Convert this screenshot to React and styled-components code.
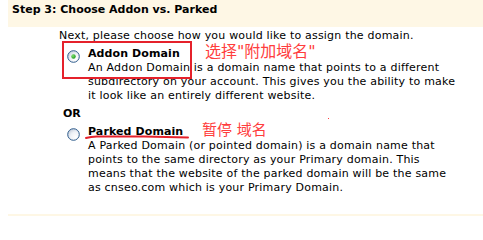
import React from 'react';
import styled, { createGlobalStyle } from 'styled-components';

const GlobalStyle = createGlobalStyle`
  html, body { margin: 0; padding: 0; background: #fff; }
  body {
    font-family: 'DejaVu Sans', Verdana, sans-serif;
    font-size: 11px;
    color: #000;
  }
`;

const Page = styled.div`
  position: relative;
  display: flex;
  flex-direction: column;
  width: 483px;
  height: 216px;
  overflow: hidden;
  background: #fff;
`;

const StepHeader = styled.div`
  box-sizing: border-box;
  flex-shrink: 0;
  height: 27px;
  margin-left: 8px;
  padding: 3px 0 0 4px;
  background: #fef7e5;
  font-weight: 700;
  line-height: 14px;
`;

const Intro = styled.div`
  margin-top: 2px;
  padding-left: 59px;
  line-height: 14px;
  letter-spacing: 0.2px;
  white-space: nowrap;
`;

const Option = styled.div`
  display: flex;
  align-items: flex-start;
  gap: 8px;
  margin-top: 4px;
  padding-left: 67px;
`;

const RadioWrap = styled.div`
  flex-shrink: 0;
  width: 13px;
  height: 13px;
  margin-top: 3px;
`;

const OptionText = styled.div`
  line-height: 14px;
  letter-spacing: 0.2px;
  white-space: nowrap;
`;

const OptionTitle = styled.div`
  font-weight: 700;
  letter-spacing: 0.1px;
`;

const Or = styled.div`
  margin-top: 4px;
  padding-left: 63px;
  font-weight: 700;
  line-height: 14px;
`;

const BottomBar = styled.div`
  flex-shrink: 0;
  margin: auto 0 0 8px;
  height: 2px;
  background: #fef7e5;
`;

// hand-drawn annotations lying over the screenshot
const MarkBox = styled.div`
  position: absolute;
  left: 62px;
  top: 41px;
  width: 126px;
  height: 34px;
  border: 2px solid #e5212b;
`;

const Note = styled.div`
  position: absolute;
  left: ${p => p.$x}px;
  top: ${p => p.$y}px;
  font-family: 'DejaVu Sans', 'Noto Sans CJK SC', sans-serif;
  font-size: ${p => p.$size}px;
  line-height: 1;
  color: #ff3d3d;
  white-space: nowrap;
`;

const Underline = styled.svg`
  position: absolute;
  left: 84px;
  top: 133px;
`;

const Speck = styled.div`
  position: absolute;
  left: 328px;
  top: 118px;
  width: 1px;
  height: 1px;
  background: #ff3d3d;
`;

function Radio({ checked, id }) {
  return (
    <svg width="13" height="13" viewBox="0 0 13 13">
      <defs>
        <radialGradient id={`rg-${id}`} cx="0.7" cy="0.75" r="0.8">
          <stop offset="0" stopColor="#ffffff" />
          <stop offset="0.6" stopColor="#eef1f6" />
          <stop offset="1" stopColor="#c7d0dd" />
        </radialGradient>
        <radialGradient id={`dot-${id}`} cx="0.35" cy="0.35" r="0.7">
          <stop offset="0" stopColor="#7fe06f" />
          <stop offset="1" stopColor="#1f9a1f" />
        </radialGradient>
      </defs>
      <circle cx="6.5" cy="6.5" r="5.8" fill={`url(#rg-${id})`} stroke="#2f5c8c" strokeWidth="1" />
      {checked && <circle cx="6.5" cy="6.5" r="2.2" fill={`url(#dot-${id})`} />}
    </svg>
  );
}

export default function App() {
  return (
    <Page>
      <GlobalStyle />
      <StepHeader>Step 3: Choose Addon vs. Parked</StepHeader>
      <Intro>Next, please choose how you would like to assign the domain.</Intro>

      <Option>
        <RadioWrap>
          <Radio checked id="addon" />
        </RadioWrap>
        <OptionText>
          <OptionTitle>Addon Domain</OptionTitle>
          <div>An Addon Domain is a domain name that points to a different</div>
          <div>subdirectory on your account. This gives you the ability to make</div>
          <div>it look like an entirely different website.</div>
        </OptionText>
      </Option>

      <Or>OR</Or>

      <Option>
        <RadioWrap>
          <Radio id="parked" />
        </RadioWrap>
        <OptionText>
          <OptionTitle>Parked Domain</OptionTitle>
          <div>A Parked Domain (or pointed domain) is a domain name that</div>
          <div>points to the same directory as your Primary domain. This</div>
          <div>means that the website of the parked domain will be the same</div>
          <div>as cnseo.com which is your Primary Domain.</div>
        </OptionText>
      </Option>

      <BottomBar />

      <MarkBox />
      <Note $x={205} $y={44} $size={16}>选择"附加域名"</Note>
      <Note $x={202} $y={123} $size={15}>暂停 域名</Note>
      <Underline width="110" height="8" viewBox="0 0 110 8">
        <path d="M2 5 Q8 3 16 3.5 L60 3.6 L104 4.4" fill="none" stroke="#e5212b" strokeWidth="2" strokeLinecap="round" />
      </Underline>
      <Speck />
    </Page>
  );
}
